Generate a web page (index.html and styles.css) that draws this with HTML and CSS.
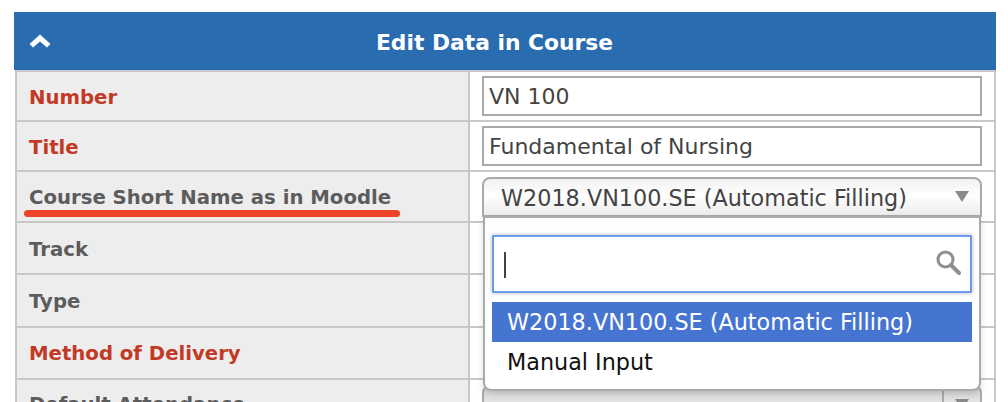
FILE: index.html
```html
<!DOCTYPE html>
<html lang="en">
<head>
    <meta charset="UTF-8">
    <title>Edit Data in Course</title>
    <link rel="stylesheet" href="styles.css">
</head>
<body>
    <div class="panel">
        <div class="panel-head">
            <svg class="collapse-icon" width="22" height="16" viewBox="0 0 22 16"><path d="M11 1.5 L21.5 11 L18 14.5 L11 8.5 L4 14.5 L0.5 11 Z" fill="#fff"/></svg>
            <span>Edit Data in Course</span>
        </div>
        <table class="edit-table">
            <tr class="row-1">
                <th class="required">Number</th>
                <td><div class="text-input">VN 100</div></td>
            </tr>
            <tr class="row-1">
                <th class="required">Title</th>
                <td><div class="text-input">Fundamental of Nursing</div></td>
            </tr>
            <tr class="row-2">
                <th><span class="marked">Course Short Name as in Moodle</span></th>
                <td>
                    <div class="select-wrap">
                        <div class="select open">
                            <span>W2018.VN100.SE (Automatic Filling)</span>
                            <i class="arrow"></i>
                        </div>
                        <div class="dropdown">
                            <div class="search">
                                <i class="caret"></i>
                                <svg width="26" height="26" viewBox="0 0 26 26"><circle cx="10.5" cy="10.5" r="7.5" fill="none" stroke="#8f8f8f" stroke-width="3"/><path d="M16 16 L24 24" stroke="#8f8f8f" stroke-width="4" stroke-linecap="round"/></svg>
                            </div>
                            <div class="option active">W2018.VN100.SE (Automatic Filling)</div>
                            <div class="option">Manual Input</div>
                        </div>
                    </div>
                </td>
            </tr>
            <tr class="row-3">
                <th>Track</th>
                <td></td>
            </tr>
            <tr class="row-4">
                <th>Type</th>
                <td></td>
            </tr>
            <tr class="row-3">
                <th class="required flat">Method of Delivery</th>
                <td></td>
            </tr>
            <tr class="row-3">
                <th class="raised">Default Attendance</th>
                <td>
                    <div class="select closed">
                        <b class="closed-arrow"><i class="arrow"></i></b>
                    </div>
                </td>
            </tr>
        </table>
    </div>
</body>
</html>
```

FILE: styles.css
```css
html, body {
    margin: 0;
    height: 402px;
    overflow: hidden;
    background: #fff;
}
body {
    padding: 12px 12px 0 14px;
    font-family: "DejaVu Sans", Verdana, sans-serif;
    color: #444;
}
.panel-head {
    position: relative;
    height: 58px;
    padding-right: 21px;
    background: #2a6cb0;
    color: #fff;
    font-size: 21.8px;
    font-weight: bold;
    line-height: 61px;
    text-align: center;
}
.collapse-icon {
    position: absolute;
    left: 15px;
    top: 21px;
}
.edit-table {
    width: 981px;
    margin-left: 1px;
    border-collapse: collapse;
    table-layout: fixed;
}
.edit-table th, .edit-table td {
    border: 2px solid #c8c8c8;
    padding: 0;
}
.edit-table th {
    width: 453px;
    padding: 2px 0 0 12px;
    background: #ededed;
    color: #5c5c5c;
    font-size: 19.7px;
    font-weight: bold;
    text-align: left;
    box-sizing: border-box;
}
.edit-table th.flat {
    padding-top: 0;
}
.edit-table th.raised {
    padding-top: 0;
    padding-bottom: 2px;
}
.edit-table td {
    padding: 0 12px;
    background: #fff;
    box-sizing: border-box;
}
.edit-table th.required {
    color: #c23a26;
}
.row-1 { height: 50px; }
.row-2 { height: 51px; }
.row-3 { height: 52px; }
.row-4 { height: 53px; }
.marked {
    position: relative;
    display: inline-block;
}
.marked::after {
    content: "";
    position: absolute;
    left: -5px;
    right: -9px;
    bottom: -8px;
    height: 7px;
    border-radius: 4px;
    background: #ee4428;
}
.text-input {
    box-sizing: border-box;
    height: 40px;
    border: 2px solid #a9a9a9;
    padding-left: 5px;
    font-size: 22px;
    line-height: 38px;
    background: #fff;
}
.select-wrap {
    position: relative;
}
.select {
    position: relative;
    box-sizing: border-box;
    height: 40px;
    border: 2px solid #aaa;
    font-size: 22.3px;
    line-height: 38px;
}
.select.open {
    padding-left: 17px;
    border-radius: 8px 8px 0 0;
    background: linear-gradient(#f1f1f1, #fff 45%, #ececec);
}
.select.closed {
    border-radius: 8px;
    background: linear-gradient(#d8d8d8, #f2f2f2);
}
.arrow {
    position: absolute;
    right: 11px;
    top: 12px;
    border-left: 7px solid transparent;
    border-right: 7px solid transparent;
    border-top: 11px solid #8a8a8a;
}
.closed-arrow {
    position: absolute;
    right: 0;
    top: 0;
    bottom: 0;
    width: 36px;
    border-left: 2px solid #aaa;
}
.dropdown {
    position: absolute;
    z-index: 2;
    left: 1px;
    right: 1px;
    top: 39px;
    box-sizing: border-box;
    height: 175px;
    padding: 17px 7px 0;
    border: 2px solid #aaa;
    border-radius: 0 0 8px 8px;
    background: #fff;
    box-shadow: 0 3px 6px rgba(0,0,0,0.15);
}
.search {
    position: relative;
    box-sizing: border-box;
    height: 58px;
    margin-bottom: 9px;
    border: 2px solid #6b9bef;
    box-shadow: 0 0 4px rgba(0,0,0,0.3);
}
.search svg {
    position: absolute;
    right: 9px;
    top: 12px;
}
.caret {
    position: absolute;
    left: 10px;
    top: 15px;
    width: 2px;
    height: 26px;
    background: #444;
}
.option {
    height: 40px;
    padding-left: 15px;
    font-size: 22.3px;
    line-height: 40px;
    color: #111;
}
.option.active {
    background: #4675d1;
    color: #fff;
}
```
